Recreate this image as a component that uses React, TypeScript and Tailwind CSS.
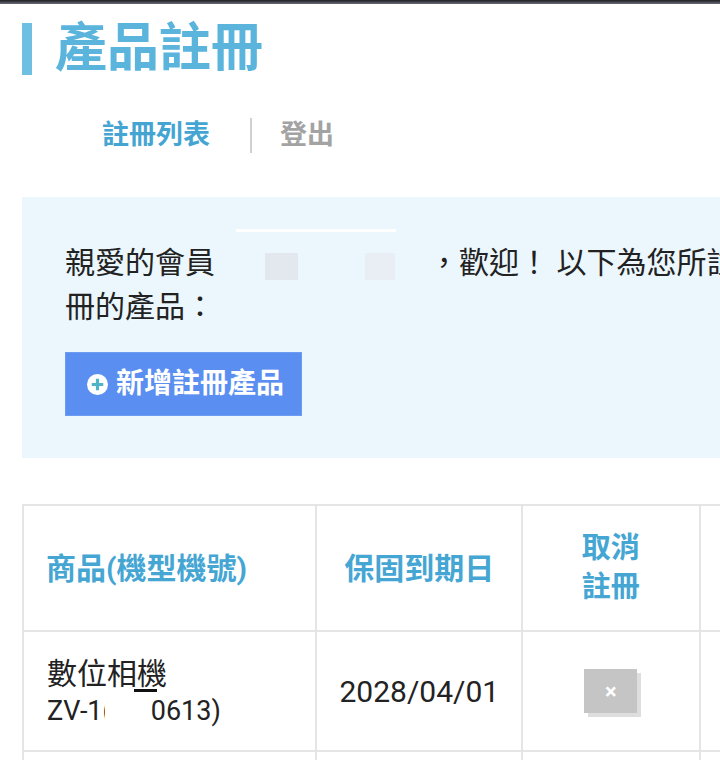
import React from 'react';

const font = "font-['Roboto','Noto_Sans_CJK_TC',sans-serif]";

const PlusCircle: React.FC = () => (
  <svg width="21" height="21" viewBox="0 0 20 20" className="shrink-0">
    <circle cx="10" cy="10" r="10" fill="#ffffff" />
    <path d="M10 4.5v11M4.5 10h11" stroke="#4fb3c9" strokeWidth="3" />
  </svg>
);

const App: React.FC = () => {
  return (
    <div className={`w-[720px] h-[760px] overflow-hidden bg-white ${font}`}>
      <div className="h-[4px] bg-gradient-to-b from-[#1e1f24] to-[#6b6e78]" />
      <div className="w-[820px] pl-[22px]">
        {/* title */}
        <div className="mt-[19px] flex items-center gap-[23px]">
          <div className="w-[10px] h-[52px] bg-[#6dc0e2]" />
          <h1 className="text-[52px] leading-[52px] font-bold text-[#5ab4dc]">產品註冊</h1>
        </div>

        {/* nav */}
        <div className="mt-[42px] pl-[80px] flex items-center text-[27px] leading-[36px] font-bold">
          <span className="text-[#45a5d2]">註冊列表</span>
          <span className="ml-[40px] mr-[28px] w-[2px] h-[35px] bg-[#d0d0d0]" />
          <span className="text-[#a3a3a3]">登出</span>
        </div>

        {/* welcome box */}
        <div className="mt-[44px] bg-[#ebf6fd] pt-[44px] pb-[42px] pl-[43px]">
          <p className="text-[30px] leading-[44px] text-[#222] whitespace-nowrap">
            親愛的會員
            <span className="inline-flex relative w-[214px] h-[30px] align-middle">
              <span className="absolute left-[21px] -top-[21px] w-[160px] h-[3px] bg-white" />
              <span className="absolute left-[50px] top-[3px] w-[33px] h-[27px] bg-[#e2e8ee]" />
              <span className="absolute left-[150px] top-[3px] w-[30px] h-[27px] bg-[#e8eef3]" />
            </span>
            ，歡迎！ 以下為您所註
            <br />
            冊的產品：
          </p>
          <button className="mt-[23px] w-[237px] h-[64px] bg-[#5a8ef0] flex items-center gap-[8px] pl-[21px] text-white text-[28px] font-bold border border-[#6d9bf2]">
            <PlusCircle />
            新增註冊產品
          </button>
        </div>

        {/* table */}
        <table className="mt-[46px] border-collapse">
          <thead>
            <tr className="h-[126px]">
              <th className="w-[294px] border-2 border-[#e5e5e5] pl-[22px] text-left text-[30px] leading-[39px] font-bold text-[#45a6d4]">商品(機型機號)</th>
              <th className="w-[206px] border-2 border-[#e5e5e5] text-center text-[30px] leading-[39px] font-bold text-[#45a6d4]">保固到期日</th>
              <th className="w-[178px] border-2 border-[#e5e5e5] text-center text-[29px] leading-[39px] font-bold text-[#45a6d4]">取消<br />註冊</th>
              <th className="w-[120px] border-2 border-[#e5e5e5]" />
            </tr>
          </thead>
          <tbody>
            <tr className="h-[120px]">
              <td className="border-2 border-[#e5e5e5] pl-[23px] text-[#222]">
                <div className="relative text-[30px] leading-[40px]">
                  數位相機
                  <span className="absolute left-[87px] top-[35px] w-[23px] h-[3px] bg-[#111]" />
                </div>
                <div className="text-[27px] leading-[34px] flex">
                  <span>ZV-1(</span>
                  <span className="w-[46px] bg-white -ml-[7px]" />
                  <span>0613)</span>
                </div>
              </td>
              <td className="border-2 border-[#e5e5e5] text-center text-[30px] text-[#222]">2028/04/01</td>
              <td className="border-2 border-[#e5e5e5]">
                <div className="flex justify-center">
                  <div className="w-[53px] h-[44px] bg-[#c5c5c5] shadow-[4px_4px_0_#dedede] flex items-center justify-center text-white text-[22px] font-bold">
                    ×
                  </div>
                </div>
              </td>
              <td className="border-2 border-[#e5e5e5]" />
            </tr>
            <tr className="h-[60px]">
              <td className="border-2 border-[#e5e5e5]" />
              <td className="border-2 border-[#e5e5e5]" />
              <td className="border-2 border-[#e5e5e5]" />
              <td className="border-2 border-[#e5e5e5]" />
            </tr>
          </tbody>
        </table>
      </div>
    </div>
  );
};

export default App;
